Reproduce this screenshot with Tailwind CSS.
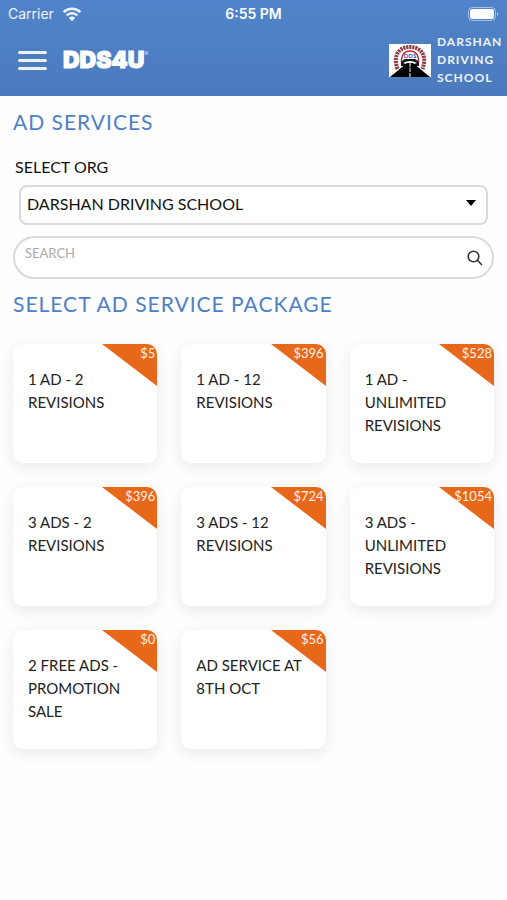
<!DOCTYPE html>
<html lang="en">
<head>
    <meta charset="utf-8">
    <meta name="viewport" content="width=device-width, initial-scale=1">
    <title>Ad Services</title>
    <script src="https://cdn.jsdelivr.net/npm/@tailwindcss/browser@4"></script>
</head>
<body class="bg-[#fefefe] min-h-screen font-['Lato',sans-serif] text-[#222]">
    <header class="bg-linear-to-b from-[#5083c9] to-[#4b7bbe] text-white">
        <!-- Status bar -->
        <div class="grid grid-cols-3 items-center h-7 px-2 font-['Inter',sans-serif]">
            <div class="flex items-center gap-2 text-sm text-white/90">
                <span>Carrier</span>
                <svg class="w-5 h-4" viewBox="0 0 20 16" fill="none" stroke="currentColor" stroke-width="2.4">
                    <path d="M1.6 6.2a12 12 0 0 1 16.8 0M4.6 9.4a7.8 7.8 0 0 1 10.800 0"/>
                    <path d="M10 15.2 6.8 11.9a4.6 4.6 0 0 1 6.4 0z" fill="currentColor" stroke="none"/>
                </svg>
            </div>
            <div class="text-center text-sm font-semibold">6:55 PM</div>
            <svg class="justify-self-end w-8 h-4" viewBox="0 0 32 16">
                <rect x="1.5" y="1.5" width="27" height="13" rx="4" fill="none" stroke="#fff" stroke-opacity=".5"/>
                <rect x="3" y="3" width="24" height="10" rx="2.5" fill="#fff"/>
                <path d="M30 6c1.6.6 1.6 3.4 0 4z" fill="#fff" fill-opacity=".6"/>
            </svg>
        </div>

        <!-- Nav bar -->
        <div class="flex items-center h-17 pl-[18px] pr-1 pb-1">
            <button type="button" aria-label="Menu" class="flex flex-col gap-[5px]">
                <span class="w-[29px] h-[3px] rounded bg-white/90"></span>
                <span class="w-[29px] h-[3px] rounded bg-white/90"></span>
                <span class="w-[29px] h-[3px] rounded bg-white/90"></span>
            </button>
            <a href="#" class="flex ml-4 font-['Inter',sans-serif] text-[23px] leading-6 font-black [-webkit-text-stroke:1px_white]">DDS4U<sup class="top-0 text-[6px] leading-3 font-normal text-white/70 [-webkit-text-stroke:0]">®</sup></a>
            <div class="flex items-center gap-[6px] ml-auto">
                <svg class="w-[42px] h-[33px]" viewBox="0 0 42 33">
                    <rect width="42" height="33" fill="#fff"/>
                    <path d="M8.5 25C3 9 12 3 21 3s18 6 12.5 22" fill="none" stroke="#8a3a42" stroke-width="4" stroke-dasharray="2.2 .8"/>
                    <path d="M12.5 19C12 10 16 7 21 7s9 3 8.5 12" fill="#fff" stroke="#c22026" stroke-width="1.5"/>
                    <path d="M12 19q1-3 4-4h10q3 1 4 4v3H12z" fill="#16161c"/>
                    <path d="M14 19q7-4 14 0l-3 1h-8z" fill="#fff"/>
                    <text x="21" y="14" text-anchor="middle" font-size="6" font-weight="700" fill="#4450b8">DDS</text>
                    <path d="M1 33 18 19h6l17 14z" fill="#050505"/>
                    <path d="M21 19v14" stroke="#fff" stroke-dasharray="4 1"/>
                </svg>
                <div class="w-[66px] text-xs leading-[18px] font-bold tracking-[1px] text-white/90">DARSHAN DRIVING SCHOOL</div>
            </div>
        </div>
    </header>

    <main class="px-[13px] pt-3">
        <h1 class="text-[21px] leading-7 tracking-[1px] text-[#4d80c6]">AD SERVICES</h1>

        <div class="px-[2px] mt-[19px]">
            <label for="org" class="block text-base leading-6 text-[#111]">SELECT ORG</label>
        </div>
        <div class="relative mx-[6px] mt-[6px]">
            <select id="org" class="appearance-none block w-full h-10 pl-[6px] pr-8 pb-[2px] border-2 border-[#dadada] rounded-lg bg-white text-base text-[#111]">
                <option>DARSHAN DRIVING SCHOOL</option>
            </select>
            <svg class="absolute right-3 top-[15px] w-[10px] h-[6px] pointer-events-none" viewBox="0 0 10 6"><path d="M0 0h10L5 6z" fill="#000"/></svg>
        </div>

        <div class="flex items-center mt-[11px] h-[43px] pl-[10px] pr-[9px] border-2 border-[#dadada] rounded-full bg-white">
            <input type="search" aria-label="Search" placeholder="SEARCH" class="flex-1 min-w-0 pb-2 text-[13px] outline-none placeholder:text-[#aaa]">
            <button type="button" aria-label="Search">
                <svg class="w-4 h-4" viewBox="0 0 16 16" fill="none" stroke="#333" stroke-width="1.6"><circle cx="6.5" cy="6.5" r="5.3"/><path d="m10.3 10.3 4.7 4.7"/></svg>
            </button>
        </div>

        <h2 class="mt-[11px] text-[21px] leading-7 tracking-[1px] text-[#4d80c6]">SELECT AD SERVICE PACKAGE</h2>

        <div id="packages" class="grid grid-cols-3 gap-6 mt-[26px] pb-6"></div>
    </main>

    <script>
        const packages = [
            { name: '1 AD - 2 REVISIONS', price: 5 },
            { name: '1 AD - 12 REVISIONS', price: 396 },
            { name: '1 AD - UNLIMITED REVISIONS', price: 528 },
            { name: '3 ADS - 2 REVISIONS', price: 396 },
            { name: '3 ADS - 12 REVISIONS', price: 724 },
            { name: '3 ADS - UNLIMITED REVISIONS', price: 1054 },
            { name: '2 FREE ADS - PROMOTION SALE', price: 0 },
            { name: 'AD SERVICE AT 8TH OCT', price: 56 },
        ];

        document.getElementById('packages').innerHTML = packages.map(p => `
            <button type="button" class="relative flex items-start min-h-[119px] pl-[15px] pr-6 pt-6 pb-6 overflow-hidden rounded-[10px] bg-white shadow-[0_4px_16px_rgba(0,0,0,0.09)] text-left">
                <svg class="absolute top-0 right-0 w-[55px] h-[42px]" viewBox="0 0 55 42"><path d="M0 0h55v42z" fill="#e8681a"/></svg>
                <span class="absolute top-0 right-[2px] text-[13px] leading-[18px] text-white/90">$${p.price}</span>
                <span class="text-[15px] leading-[23px]">${p.name}</span>
            </button>`).join('');
    </script>
</body>
</html>
